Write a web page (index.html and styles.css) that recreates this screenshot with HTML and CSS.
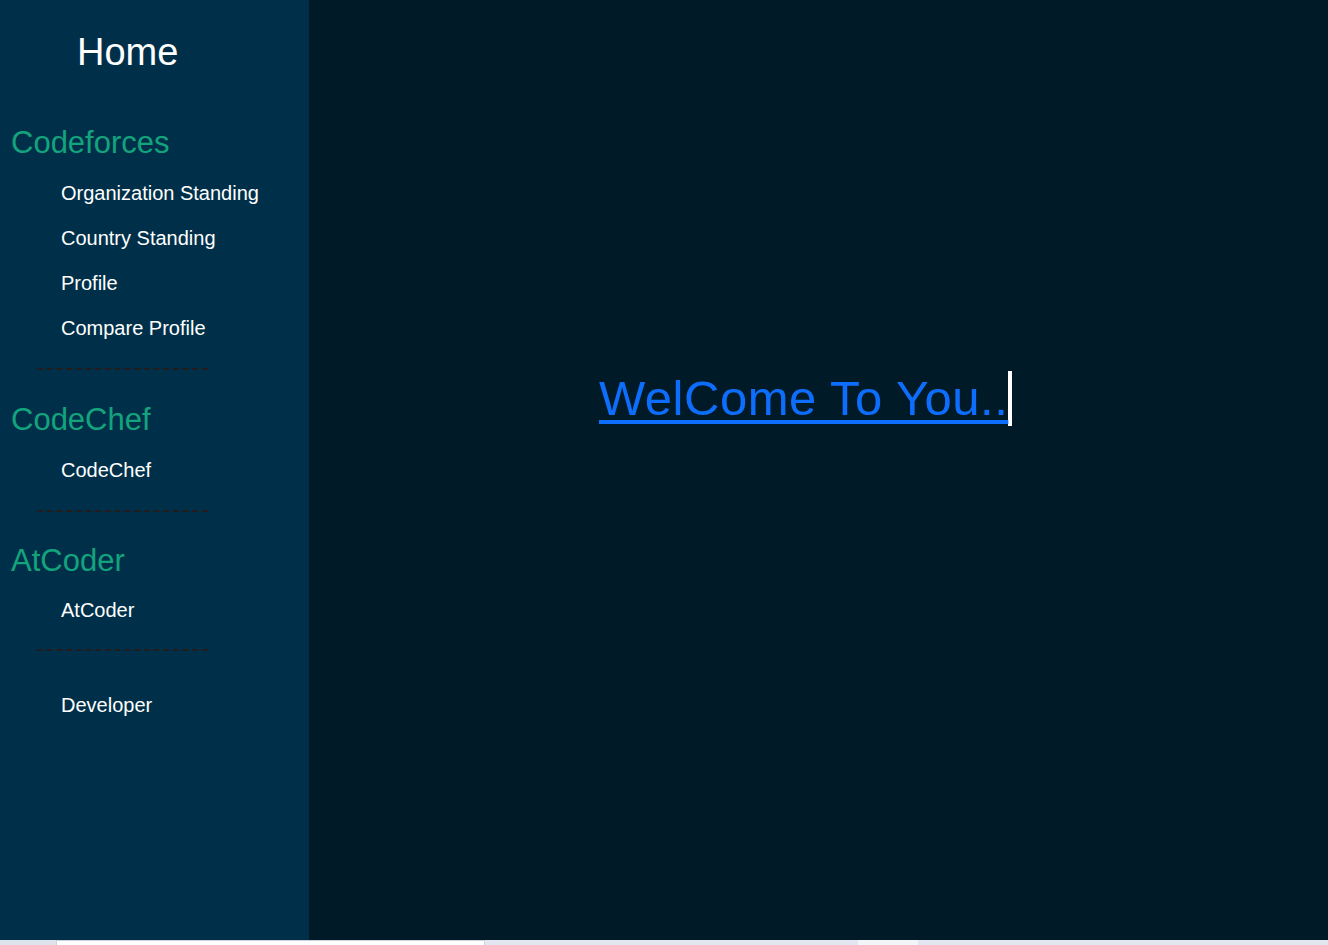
FILE: index.html
```html
<!DOCTYPE html>
<html lang="en">
<head>
<meta charset="utf-8">
<title>Home</title>
<link rel="stylesheet" href="styles.css">
</head>
<body>
<div class="page">
  <nav class="sidebar">
    <h1 class="brand">Home</h1>
    <section class="group">
      <h2 class="group-title">Codeforces</h2>
      <ul class="links">
        <li><a href="#">Organization Standing</a></li>
        <li><a href="#">Country Standing</a></li>
        <li><a href="#">Profile</a></li>
        <li><a href="#">Compare Profile</a></li>
      </ul>
      <hr class="divider">
    </section>
    <section class="group">
      <h2 class="group-title">CodeChef</h2>
      <ul class="links">
        <li><a href="#">CodeChef</a></li>
      </ul>
      <hr class="divider">
    </section>
    <section class="group group-last">
      <h2 class="group-title">AtCoder</h2>
      <ul class="links">
        <li><a href="#">AtCoder</a></li>
      </ul>
      <hr class="divider">
    </section>
    <ul class="links dev">
      <li><a href="#">Developer</a></li>
    </ul>
  </nav>
  <main class="main">
    <span class="typing"><a href="#" class="welcome">WelCome To You..</a></span>
  </main>
</div>
<div class="taskbar">
  <span class="seg s1"></span>
  <span class="seg s2"></span>
  <span class="seg s3"></span>
  <span class="seg s4"></span>
  <span class="seg s5"></span>
</div>
</body>
</html>
```
FILE: styles.css
```css
* { box-sizing: border-box; }
html, body { margin: 0; padding: 0; }
body {
  font-family: "Liberation Sans", Arial, sans-serif;
  background: #001a27;
  width: 1328px;
  height: 945px;
  overflow: hidden;
}
.page {
  display: flex;
  height: 940px;
}
.sidebar {
  width: 309px;
  flex: 0 0 309px;
  background: #003049;
  padding-top: 31px;
  display: flex;
  flex-direction: column;
}
.brand {
  margin: 0 0 51px 0;
  padding-left: 77px;
  font-size: 38px;
  font-weight: normal;
  line-height: 43px;
  height: 43px;
  color: #ffffff;
}
.group {
  display: flex;
  flex-direction: column;
}
.group + .group .group-title { margin-top: 31.5px; }
.group-title {
  margin: 0 0 21px 0;
  padding-left: 11px;
  font-size: 31px;
  font-weight: normal;
  line-height: 36px;
  height: 36px;
  color: #13a37d;
}
.group-last .group-title {
  margin-top: 33px;
  margin-bottom: 20px;
}
.group-last .divider { margin-top: 27px; }
.links {
  list-style: none;
  margin: 0;
  padding: 0 0 0 61px;
  display: flex;
  flex-direction: column;
  gap: 22px;
}
.links li {
  height: 23px;
  line-height: 23px;
}
.links a {
  color: #ffffff;
  text-decoration: none;
  font-size: 20px;
  line-height: 23px;
}
.divider {
  margin: 28px 0 0 37px;
  width: 171px;
  height: 0;
  border: 0;
  border-top: 2px dashed #231c1c;
}
.links.dev { margin-top: 42.5px; }
.main {
  flex: 1;
  background: #001a27;
  padding: 371px 0 0 290px;
}
.typing {
  display: inline-block;
  border-right: 4px solid #ffffff;
  line-height: 55px;
  height: 55px;
  font-size: 49px;
}
.welcome {
  color: #0d6efd;
  letter-spacing: 0.5px;
  text-decoration: underline;
  text-decoration-thickness: 4px;
  text-underline-offset: 5px;
}
.taskbar {
  display: flex;
  height: 5px;
  background: #e2e6ee;
}
.seg { display: block; height: 5px; }
.s1 { width: 56px; background: #dfe3ec; }
.s2 { width: 429px; background: #fdfdfd; border-top: 1px solid #cfd3da; border-left: 1px solid #cfd3da; border-right: 1px solid #cfd3da; }
.s3 { width: 373px; background: #e2e6ee; }
.s4 { width: 60px; background: #f3f4f8; }
.s5 { flex: 1; background: #e2e6ee; }
```
